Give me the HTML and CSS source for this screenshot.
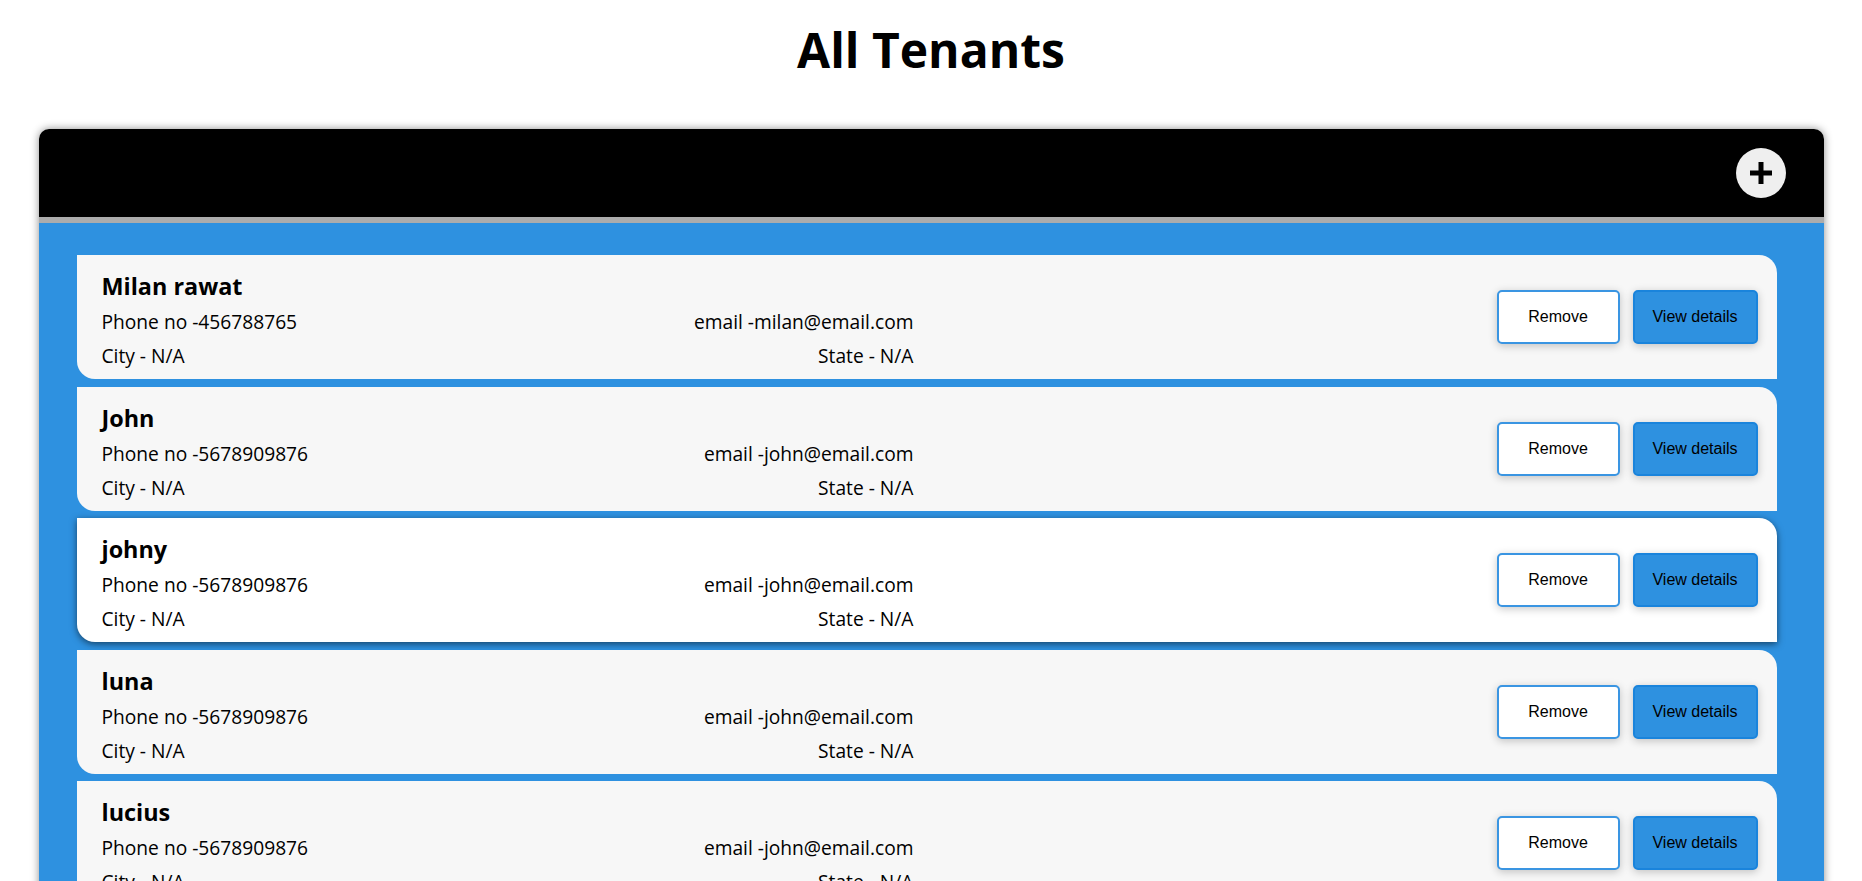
FILE: index.html
```html
<!DOCTYPE html>
<html lang="en">
<head>
<meta charset="utf-8">
<title>All Tenants</title>
<link rel="stylesheet" href="styles.css">
</head>
<body>
<h1 class="title">All Tenants</h1>
<div class="panel">
  <div class="panel-header">
    <button class="add-btn" aria-label="Add tenant">
      <svg width="22" height="22" viewBox="0 0 22 22"><rect x="0" y="8.5" width="22" height="5" fill="#000"/><rect x="8.5" y="0" width="5" height="22" fill="#000"/></svg>
    </button>
  </div>
  <div class="panel-body">
    <div class="card">
      <div class="info">
        <div class="name">Milan rawat</div>
        <div class="row"><span>Phone no -456788765</span><span>email -milan@email.com</span></div>
        <div class="row"><span>City - N/A</span><span>State - N/A</span></div>
      </div>
      <div class="actions">
        <button class="btn btn-remove">Remove</button>
        <button class="btn btn-view">View details</button>
      </div>
    </div>
    <div class="card">
      <div class="info">
        <div class="name">John</div>
        <div class="row"><span>Phone no -5678909876</span><span>email -john@email.com</span></div>
        <div class="row"><span>City - N/A</span><span>State - N/A</span></div>
      </div>
      <div class="actions">
        <button class="btn btn-remove">Remove</button>
        <button class="btn btn-view">View details</button>
      </div>
    </div>
    <div class="card card-active">
      <div class="info">
        <div class="name">johny</div>
        <div class="row"><span>Phone no -5678909876</span><span>email -john@email.com</span></div>
        <div class="row"><span>City - N/A</span><span>State - N/A</span></div>
      </div>
      <div class="actions">
        <button class="btn btn-remove">Remove</button>
        <button class="btn btn-view">View details</button>
      </div>
    </div>
    <div class="card">
      <div class="info">
        <div class="name">luna</div>
        <div class="row"><span>Phone no -5678909876</span><span>email -john@email.com</span></div>
        <div class="row"><span>City - N/A</span><span>State - N/A</span></div>
      </div>
      <div class="actions">
        <button class="btn btn-remove">Remove</button>
        <button class="btn btn-view">View details</button>
      </div>
    </div>
    <div class="card">
      <div class="info">
        <div class="name">lucius</div>
        <div class="row"><span>Phone no -5678909876</span><span>email -john@email.com</span></div>
        <div class="row"><span>City - N/A</span><span>State - N/A</span></div>
      </div>
      <div class="actions">
        <button class="btn btn-remove">Remove</button>
        <button class="btn btn-view">View details</button>
      </div>
    </div>
  </div>
</div>
</body>
</html>
```

FILE: styles.css
```css
html {
  scrollbar-width: none;
}
body {
  margin: 0;
  background: #ffffff;
  font-family: "Open Sans", "Noto Sans", sans-serif;
  color: #000;
}
.title {
  margin: 20px 0 0;
  text-align: center;
  font-size: 48px;
  line-height: 60px;
  font-weight: 700;
}
.panel {
  width: 1785px;
  margin: 49px auto 0;
  border-radius: 10px 10px 0 0;
  box-shadow: 0 0 8px rgba(0, 0, 0, 0.45);
  overflow: hidden;
}
.panel-header {
  height: 88px;
  background: #000;
  border-bottom: 6px solid #acacac;
  display: flex;
  align-items: center;
  justify-content: flex-end;
  padding: 0 38px;
}
.add-btn {
  width: 50px;
  height: 50px;
  border-radius: 50%;
  border: none;
  background: #efefef;
  display: flex;
  align-items: center;
  justify-content: center;
  padding: 0;
}
.panel-body {
  background: #2e91e0;
  padding: 32px 47px 40px 38px;
  display: flex;
  flex-direction: column;
  gap: 7.5px;
}
.card {
  height: 124px;
  box-sizing: border-box;
  background: #f7f7f7;
  border-radius: 0 18px 0 18px;
  display: flex;
  align-items: center;
  justify-content: space-between;
  padding: 0 19px 0 25px;
}
.card-active {
  background: #ffffff;
  box-shadow: 0 2px 7px rgba(0, 0, 0, 0.55);
}
.info {
  width: 812px;
  align-self: flex-start;
  padding-top: 14px;
}
.name {
  font-size: 23.4px;
  font-weight: 700;
  line-height: 34px;
  margin-bottom: 2px;
}
.row {
  display: flex;
  justify-content: space-between;
  font-size: 19.2px;
  line-height: 34px;
}
.actions {
  display: flex;
  gap: 13px;
}
.btn {
  height: 54px;
  box-sizing: border-box;
  border-radius: 5px;
  font-family: "Liberation Sans", Arial, sans-serif;
  font-size: 16px;
  color: #000;
  box-shadow: 0 2px 8px rgba(0, 0, 0, 0.22);
  padding: 0;
}
.btn-remove {
  width: 123px;
  background: #ffffff;
  border: 2px solid #3a95e2;
}
.btn-view {
  width: 125px;
  background: #2e91e0;
  border: 2px solid #1a84dc;
}
```
